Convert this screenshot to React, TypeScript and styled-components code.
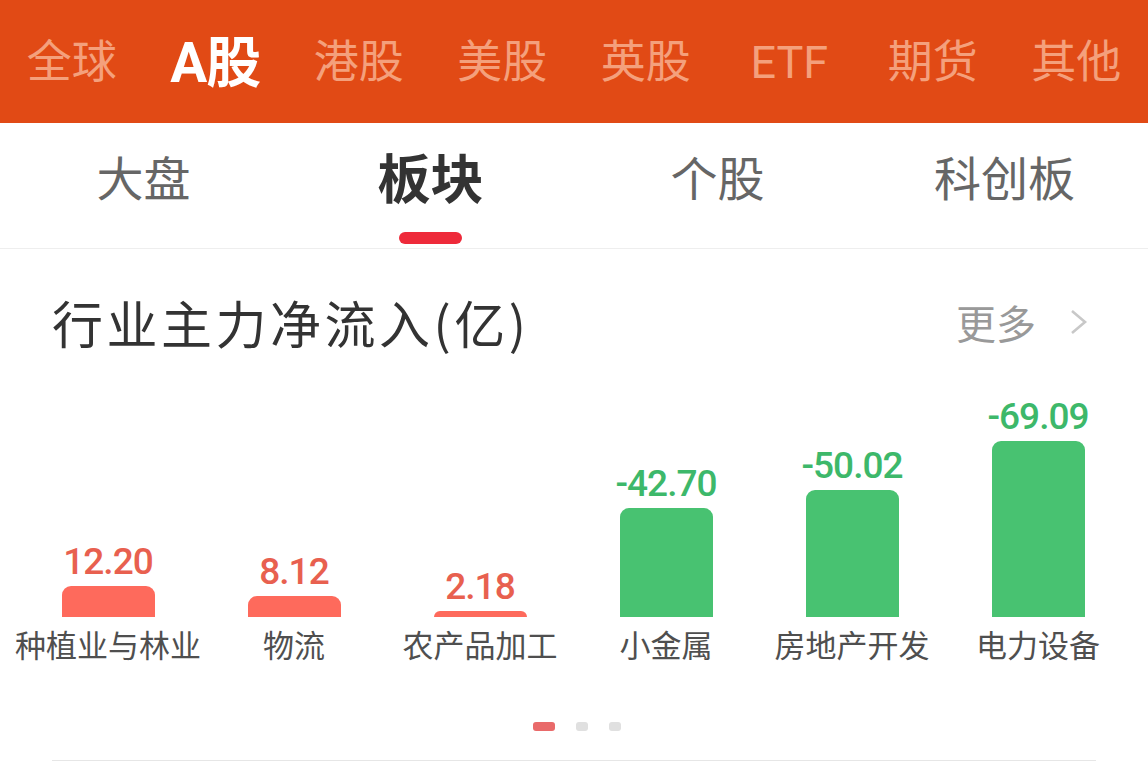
import styled, { createGlobalStyle } from "styled-components";

const GlobalStyle = createGlobalStyle`
  html, body {
    margin: 0;
    padding: 0;
    background: #ffffff;
  }
  body {
    font-family: "Noto Sans CJK SC", "Noto Sans", sans-serif;
    width: 1148px;
    overflow: hidden;
  }
`;

type Sector = {
  name: string;
  value: number;
};

const markets = ["全球", "A股", "港股", "美股", "英股", "ETF", "期货", "其他"];
const subTabs = ["大盘", "板块", "个股", "科创板"];
const sectors: Sector[] = [
  { name: "种植业与林业", value: 12.2 },
  { name: "物流", value: 8.12 },
  { name: "农产品加工", value: 2.18 },
  { name: "小金属", value: -42.7 },
  { name: "房地产开发", value: -50.02 },
  { name: "电力设备", value: -69.09 },
];

const MAX_BAR = 176;

//#region styles
const Page = styled.div`
  width: 1148px;
  height: 783px;
  background: #ffffff;
  overflow: hidden;
`;

const MarketBar = styled.div`
  height: 123px;
  background: #e14a15;
  display: grid;
  grid-template-columns: repeat(8, 1fr);
  align-items: center;
`;

const MarketTab = styled.div<{ $active?: boolean }>`
  text-align: center;
  font-family: Roboto, "Noto Sans CJK SC", sans-serif;
  font-size: ${(p) => (p.$active ? "55px" : "45px")};
  font-weight: ${(p) => (p.$active ? 700 : 400)};
  color: ${(p) => (p.$active ? "#ffffff" : "#f4a07c")};
  line-height: 60px;
  letter-spacing: ${(p) => (p.$active ? "-1px" : "0")};
  padding-top: 3px;
`;

const SubTabBar = styled.div`
  height: 125px;
  border-bottom: 1px solid #eeeeee;
  display: grid;
  grid-template-columns: repeat(4, 1fr);
`;

const SubTab = styled.div`
  display: flex;
  flex-direction: column;
  align-items: center;
  padding-top: 23px;
`;

const SubTabLabel = styled.div<{ $active?: boolean }>`
  font-size: ${(p) => (p.$active ? "53px" : "47px")};
  font-weight: ${(p) => (p.$active ? 700 : 400)};
  color: ${(p) => (p.$active ? "#333333" : "#666666")};
  line-height: 60px;
`;

const Indicator = styled.div<{ $active?: boolean }>`
  margin-top: 26px;
  width: 63px;
  height: 12px;
  border-radius: 6px;
  background: ${(p) => (p.$active ? "#ee2a3a" : "transparent")};
`;

const SectionHeader = styled.div`
  display: flex;
  align-items: center;
  justify-content: space-between;
  padding: 43px 60px 4px 52px;
`;

const SectionTitle = styled.div`
  font-size: 51px;
  color: #333333;
  line-height: 60px;
  letter-spacing: 3.5px;
`;

const MoreLink = styled.div`
  display: flex;
  align-items: center;
  gap: 34px;
  font-size: 40px;
  color: #999999;
  line-height: 60px;
`;

const Chart = styled.div`
  height: 308px;
  display: grid;
  grid-template-columns: repeat(6, 1fr);
  align-items: end;
  padding: 0 17px 0 15px;
`;

const Column = styled.div`
  display: flex;
  flex-direction: column;
  align-items: center;
`;

const Value = styled.div<{ $up: boolean }>`
  font-family: Roboto, "Liberation Sans", sans-serif;
  font-size: 37px;
  font-weight: 500;
  letter-spacing: -1px;
  line-height: 40px;
  color: ${(p) => (p.$up ? "#e8604f" : "#3db86a")};
  margin-bottom: 4px;
`;

const Bar = styled.div<{ $up: boolean }>`
  width: 93px;
  border-radius: 9px 9px 0 0;
  background: ${(p) => (p.$up ? "#fe6a5c" : "#48c271")};
`;

const Category = styled.div`
  margin-top: 7px;
  font-size: 31px;
  color: #4f4f4f;
  line-height: 40px;
  white-space: nowrap;
`;

const Dots = styled.div`
  margin-top: 58px;
  display: flex;
  justify-content: center;
  gap: 21px;
  padding-left: 6px;
`;

const Dot = styled.div<{ $active?: boolean }>`
  width: ${(p) => (p.$active ? "22px" : "12px")};
  height: 9px;
  border-radius: 3px;
  background: ${(p) => (p.$active ? "#e96a6a" : "#e0e0e0")};
`;

const Divider = styled.div`
  margin: 29px 52px 0;
  height: 1px;
  background: #e6e6e6;
`;
//#endregion styles

function Chevron() {
  return (
    <svg width="18" height="26" viewBox="0 0 18 26">
      <polyline points="2,2 15,13 2,24" fill="none" stroke="#c8c8c8" strokeWidth="2.6" />
    </svg>
  );
}

export default function App() {
  const max = Math.max(...sectors.map((s) => Math.abs(s.value)));

  return (
    <Page>
      <GlobalStyle />
      <MarketBar>
        {markets.map((m) => (
          <MarketTab key={m} $active={m === "A股"}>
            {m}
          </MarketTab>
        ))}
      </MarketBar>
      <SubTabBar>
        {subTabs.map((t) => (
          <SubTab key={t}>
            <SubTabLabel $active={t === "板块"}>{t}</SubTabLabel>
            <Indicator $active={t === "板块"} />
          </SubTab>
        ))}
      </SubTabBar>
      <SectionHeader>
        <SectionTitle>行业主力净流入(亿)</SectionTitle>
        <MoreLink>
          更多
          <Chevron />
        </MoreLink>
      </SectionHeader>
      <Chart>
        {sectors.map((s) => {
          const up = s.value >= 0;
          return (
            <Column key={s.name}>
              <Value $up={up}>{s.value.toFixed(2)}</Value>
              <Bar $up={up} style={{ height: Math.round((Math.abs(s.value) / max) * MAX_BAR) }} />
              <Category>{s.name}</Category>
            </Column>
          );
        })}
      </Chart>
      <Dots>
        <Dot $active />
        <Dot />
        <Dot />
      </Dots>
      <Divider />
    </Page>
  );
}
